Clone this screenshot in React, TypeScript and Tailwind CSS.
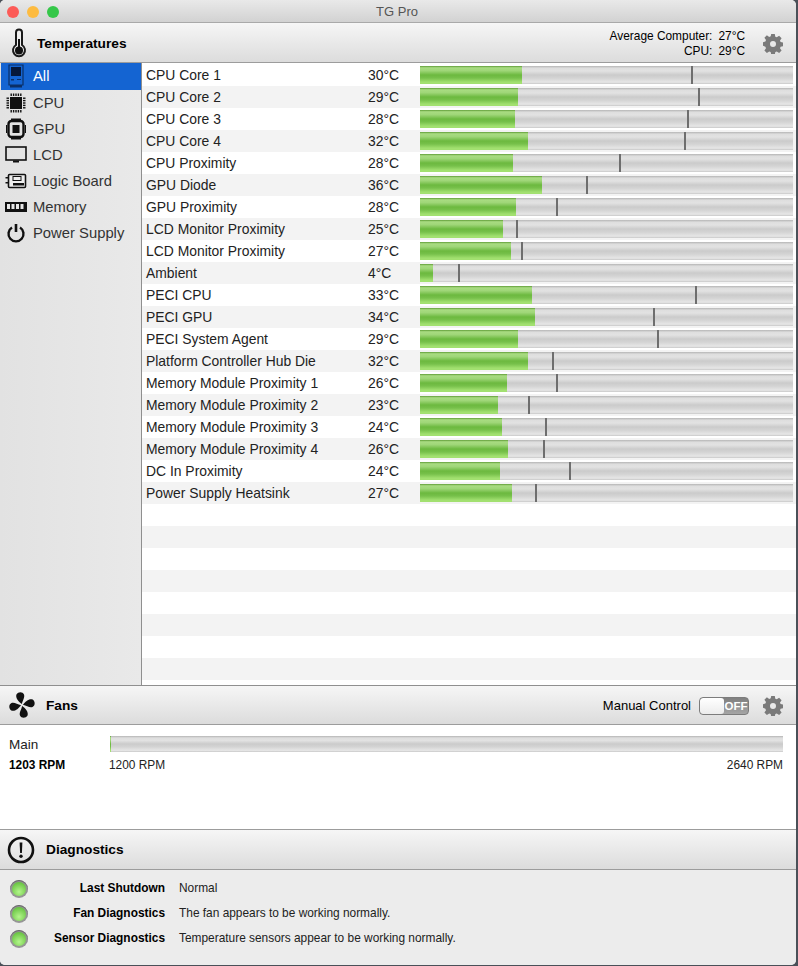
import { ReactNode } from "react";

const sensors = [
  { name: "CPU Core 1", temp: "30°C", fill: 102, mark: 271 },
  { name: "CPU Core 2", temp: "29°C", fill: 98, mark: 278 },
  { name: "CPU Core 3", temp: "28°C", fill: 95, mark: 267 },
  { name: "CPU Core 4", temp: "32°C", fill: 108, mark: 264 },
  { name: "CPU Proximity", temp: "28°C", fill: 93, mark: 199 },
  { name: "GPU Diode", temp: "36°C", fill: 122, mark: 166 },
  { name: "GPU Proximity", temp: "28°C", fill: 96, mark: 136 },
  { name: "LCD Monitor Proximity", temp: "25°C", fill: 83, mark: 96 },
  { name: "LCD Monitor Proximity", temp: "27°C", fill: 91, mark: 101 },
  { name: "Ambient", temp: "4°C", fill: 13, mark: 38 },
  { name: "PECI CPU", temp: "33°C", fill: 112, mark: 275 },
  { name: "PECI GPU", temp: "34°C", fill: 115, mark: 233 },
  { name: "PECI System Agent", temp: "29°C", fill: 98, mark: 237 },
  { name: "Platform Controller Hub Die", temp: "32°C", fill: 108, mark: 132 },
  { name: "Memory Module Proximity 1", temp: "26°C", fill: 87, mark: 136 },
  { name: "Memory Module Proximity 2", temp: "23°C", fill: 78, mark: 108 },
  { name: "Memory Module Proximity 3", temp: "24°C", fill: 82, mark: 125 },
  { name: "Memory Module Proximity 4", temp: "26°C", fill: 88, mark: 123 },
  { name: "DC In Proximity", temp: "24°C", fill: 80, mark: 149 },
  { name: "Power Supply Heatsink", temp: "27°C", fill: 92, mark: 115 },
];

const emptyRows = Array.from({ length: 9 }, (_, i) => i);

const barGray =
  "bg-[linear-gradient(to_bottom,#b5b5b5_0%,#dedede_12%,#e2e2e2_28%,#cbcbcb_50%,#d4d4d4_68%,#e6e6e6_90%,#c8c8c8_100%)]";
const barGreen =
  "bg-[linear-gradient(to_bottom,#5f9c36_0%,#a9dc82_10%,#9fd678_26%,#6cb93f_50%,#76c04a_66%,#a2e070_90%,#a2e070_100%)]";
const headerBg = "bg-[linear-gradient(to_bottom,#f6f6f6,#dcdcdc)]";

function Gear() {
  return (
    <svg width="20" height="20" viewBox="0 0 20 20" className="text-[#7a7a7a]">
      <path
        fill="currentColor"
        fillRule="evenodd"
        d="M8.2 0h3.6l.5 2.7 1.5.6 2.3-1.6 2.5 2.5-1.6 2.3.6 1.5 2.4.6v3.6l-2.4.5-.6 1.5 1.6 2.3-2.5 2.5-2.3-1.6-1.5.6-.5 2.6H8.2l-.5-2.6-1.5-.6-2.3 1.6-2.5-2.5 1.6-2.3-.6-1.5L0 11.800V8.200l2.400-.6.6-1.500L1.400 3.800l2.500-2.500 2.300 1.600 1.500-.6zM10 7a3 3 0 1 0 0 6 3 3 0 0 0 0-6z"
      />
    </svg>
  );
}

function Thermometer() {
  return (
    <svg width="16" height="32" viewBox="0 0 16 32">
      <path d="M5 17V4.500a3 3 0 0 1 6 0V17a6 6 0 1 1-6 0z" fill="#f0f0f0" stroke="#1a1a1a" strokeWidth="2" />
      <circle cx="8" cy="22.500" r="4" fill="#111" />
      <rect x="7" y="11" width="2" height="10" fill="#111" />
    </svg>
  );
}

function FanIcon() {
  const blade = "M14 13C11 10 8.500 5.500 10.500 2.500 12.500 0.300 17 0.800 17.800 4 18.300 7 15.500 9.500 14 13z";
  return (
    <svg width="28" height="28" viewBox="0 0 28 28">
      <g fill="#111" transform="rotate(-10 14 14)">
        <path d={blade} />
        <path d={blade} transform="rotate(90 14 14)" />
        <path d={blade} transform="rotate(180 14 14)" />
        <path d={blade} transform="rotate(270 14 14)" />
      </g>
    </svg>
  );
}

function Alert() {
  return (
    <svg width="28" height="28" viewBox="0 0 28 28">
      <circle cx="14" cy="14" r="12" fill="none" stroke="#111" strokeWidth="2.600" />
      <path d="M12.600 6.500h2.800l-.5 10.500h-1.800z" fill="#111" />
      <circle cx="14" cy="20.300" r="1.700" fill="#111" />
    </svg>
  );
}

function AllIcon() {
  return (
    <svg width="16" height="24" viewBox="0 0 16 24">
      <path d="M1 1h14v20H1z" fill="none" stroke="#0b2f66" strokeWidth="1.200" />
      <rect x="3" y="3" width="10" height="9" fill="#06183a" />
      <rect x="3" y="15" width="3" height="1.500" fill="#0b2f66" />
      <rect x="9" y="15" width="4" height="1" fill="#0b2f66" />
      <rect x="2" y="21" width="12" height="2.500" fill="#0b2f66" />
    </svg>
  );
}

function CpuIcon() {
  const pins = [0, 1, 2, 3, 4];
  return (
    <svg width="20" height="20" viewBox="0 0 20 20">
      <rect x="4" y="4" width="12" height="12" fill="#111" />
      {pins.map((p) => (
        <g key={p} fill="#111">
          <rect x={4.5 + p * 2.4} y="0.500" width="1.400" height="2.500" />
          <rect x={4.5 + p * 2.4} y="17" width="1.400" height="2.500" />
          <rect x="0.500" y={4.5 + p * 2.4} width="2.500" height="1.400" />
          <rect x="17" y={4.5 + p * 2.4} width="2.500" height="1.400" />
        </g>
      ))}
    </svg>
  );
}

function GpuIcon() {
  return (
    <svg width="20" height="22" viewBox="0 0 20 22">
      <rect x="2.500" y="3" width="15" height="16" rx="3" fill="none" stroke="#111" strokeWidth="2.400" />
      <rect x="6.500" y="7" width="7" height="8" fill="#111" />
      <rect x="5" y="0.500" width="10" height="1.600" fill="#111" />
      <rect x="5" y="19.900" width="10" height="1.600" fill="#111" />
      <rect x="0" y="7" width="1.200" height="8" fill="#111" />
      <rect x="18.800" y="7" width="1.200" height="8" fill="#111" />
    </svg>
  );
}

function LcdIcon() {
  return (
    <svg width="22" height="18" viewBox="0 0 22 18">
      <rect x="1" y="1" width="20" height="13" fill="none" stroke="#111" strokeWidth="1.600" />
      <path d="M8 14.500h6v2H8z" fill="#111" />
    </svg>
  );
}

function BoardIcon() {
  return (
    <svg width="22" height="16" viewBox="0 0 22 16">
      <rect x="3.500" y="1.500" width="17" height="13" rx="1" fill="#eeeeee" stroke="#111" strokeWidth="1.600" />
      <rect x="8" y="3.500" width="8" height="4" fill="none" stroke="#111" strokeWidth="1" />
      <rect x="8" y="10" width="11" height="2.500" fill="#111" />
      <rect x="0.500" y="4" width="3" height="1.500" fill="#111" />
      <rect x="0.500" y="9" width="3" height="1.500" fill="#111" />
    </svg>
  );
}

function MemoryIcon() {
  return (
    <svg width="22" height="10" viewBox="0 0 22 10">
      <rect width="22" height="10" fill="#111" />
      {[2, 6.5, 11, 15.5].map((x) => (
        <rect key={x} x={x} y="2" width="3" height="5" fill="#e6e6e6" />
      ))}
    </svg>
  );
}

function PowerIcon() {
  return (
    <svg width="20" height="20" viewBox="0 0 20 20">
      <path d="M6 4.500a7.500 7.500 0 1 0 8 0" fill="none" stroke="#111" strokeWidth="2.400" />
      <path d="M10 1v8" stroke="#111" strokeWidth="2.600" />
    </svg>
  );
}

const sideItems: { label: string; icon: ReactNode; active?: boolean }[] = [
  { label: "All", icon: <AllIcon />, active: true },
  { label: "CPU", icon: <CpuIcon /> },
  { label: "GPU", icon: <GpuIcon /> },
  { label: "LCD", icon: <LcdIcon /> },
  { label: "Logic Board", icon: <BoardIcon /> },
  { label: "Memory", icon: <MemoryIcon /> },
  { label: "Power Supply", icon: <PowerIcon /> },
];

function Led() {
  return (
    <div className="h-[18px] w-[18px] rounded-full bg-[#969696] p-[2px] shadow-[inset_0_1px_1px_#666]">
      <div className="h-full w-full rounded-full bg-[radial-gradient(circle_at_50%_70%,#b4f58c,#5cbc36_90%)]" />
    </div>
  );
}

export default function App() {
  return (
    <div className="h-[966px] w-[798px] overflow-hidden bg-[#4a5058] font-['Liberation_Sans',Arial,sans-serif] text-[#1a1a1a]">
      <div className="flex h-[965px] w-[796px] flex-col overflow-hidden rounded-t-[5px] rounded-b-[5px] bg-[#ececec]">
        {/* title bar */}
        <div className="relative flex h-[23px] shrink-0 items-center justify-center border-b border-[#a9a9a9] bg-[linear-gradient(to_bottom,#e9e9e9,#d2d2d2)] pr-[2px] pt-[2px] text-[13px] text-[#555555]">
          <div className="absolute left-[7px] top-[6px] flex gap-[8px]">
            <div className="h-3 w-3 rounded-full bg-[#fc5b57]" />
            <div className="h-3 w-3 rounded-full bg-[#fdbb40]" />
            <div className="h-3 w-3 rounded-full bg-[#35c749]" />
          </div>
          TG Pro
        </div>

        {/* temperatures header */}
        <div className={`flex h-[40px] shrink-0 items-center justify-between border-b border-[#9c9c9c] pl-[11px] pr-[13px] pt-[2px] ${headerBg}`}>
          <div className="flex items-center gap-[10px]">
            <Thermometer />
            <span className="pt-[2px] text-[13.7px] font-bold text-black">Temperatures</span>
          </div>
          <div className="flex items-center gap-[18px]">
            <div className="grid grid-cols-[auto_auto] gap-x-[6px] text-right text-[11.9px] leading-[15px] text-black">
              <span>Average Computer:</span>
              <span>27°C</span>
              <span>CPU:</span>
              <span>29°C</span>
            </div>
            <Gear />
          </div>
        </div>

        {/* main list */}
        <div className="flex h-[623px] shrink-0 border-b border-[#8f8f8f]">
          <div className="w-[142px] shrink-0 border-r border-[#8f8f8f] bg-[linear-gradient(to_right,#e2e2e2,#e9e9e9)] pl-[1px]">
            {sideItems.map((item) => (
              <div
                key={item.label}
                className={`flex h-[26px] items-center text-[14.8px] ${item.active ? "h-[27px] bg-[#1464d2] pb-[1px] text-white" : "text-[#333333]"}`}
              >
                <div className="flex w-[32px] shrink-0 items-center justify-center pr-[3px]">{item.icon}</div>
                {item.label}
              </div>
            ))}
          </div>
          <div className="min-w-0 flex-1 overflow-hidden bg-white pt-[1px]">
            {sensors.map((s, i) => (
              <div
                key={i}
                className={`flex h-[22px] items-center text-[13.9px] text-[#222222] ${i % 2 ? "bg-[#f3f3f3]" : "bg-white"}`}
              >
                <span className="w-[226px] shrink-0 pl-[4px]">{s.name}</span>
                <span className="w-[52px] shrink-0">{s.temp}</span>
                <div className={`relative h-[18px] w-[373px] shrink-0 ${barGray}`}>
                  <div className={`h-full ${barGreen}`} style={{ width: s.fill }} />
                  <div className="absolute top-0 h-full w-[2px] bg-[#6e6e6e]" style={{ left: s.mark }} />
                </div>
              </div>
            ))}
            {emptyRows.map((i) => (
              <div key={i} className={`h-[22px] ${i % 2 ? "bg-[#f3f3f3]" : "bg-white"}`} />
            ))}
          </div>
        </div>

        {/* fans */}
        <div className={`flex h-[39px] shrink-0 items-center justify-between border-b border-[#9c9c9c] pl-[8px] pr-[13px] ${headerBg}`}>
          <div className="flex items-center gap-[10px]">
            <FanIcon />
            <span className="pt-[2px] text-[13.7px] font-bold text-black">Fans</span>
          </div>
          <div className="flex items-center gap-[14px] pt-[1px]">
            <div className="flex items-center gap-[8px]">
              <span className="text-[13px] text-black">Manual Control</span>
              <div className="flex h-[18px] w-[50px] overflow-hidden rounded-[4px] border border-[#7c7c7c] bg-[linear-gradient(to_bottom,#7f7f7f,#a5a5a5)]">
                <div className="w-[24px] rounded-[3px] bg-[linear-gradient(to_bottom,#ffffff,#ececec)]" />
                <span className="flex-1 text-center text-[11.5px] font-bold leading-[16px] text-white">OFF</span>
              </div>
            </div>
            <Gear />
          </div>
        </div>

        <div className="h-[104px] shrink-0 bg-white pl-[9px] pr-[13px] pt-[11px]">
          <div className="flex h-[16px] items-center">
            <span className="w-[101px] shrink-0 pt-[3px] text-[13.5px] text-[#222222]">Main</span>
            <div className={`h-[16px] flex-1 ${barGray}`}>
              <div className={`h-full w-[1px] ${barGreen}`} />
            </div>
          </div>
          <div className="mt-[5px] flex items-center text-[11.9px] text-[#222222]">
            <span className="w-[100px] shrink-0 font-bold text-black">1203 RPM</span>
            <span className="flex-1">1200 RPM</span>
            <span>2640 RPM</span>
          </div>
        </div>

        {/* diagnostics */}
        <div className={`flex h-[41px] shrink-0 items-center gap-[11px] border-y border-[#9c9c9c] pl-[7px] ${headerBg}`}>
          <Alert />
          <span className="pt-[2px] text-[13.7px] font-bold text-black">Diagnostics</span>
        </div>
        <div className="flex-1 bg-[#ececec] pl-[10px] pt-[6px] text-[11.9px] text-[#222222]">
          {[
            ["Last Shutdown", "Normal"],
            ["Fan Diagnostics", "The fan appears to be working normally."],
            ["Sensor Diagnostics", "Temperature sensors appear to be working normally."],
          ].map(([label, value]) => (
            <div key={label} className="flex h-[25px] items-center">
              <Led />
              <span className="w-[137px] shrink-0 text-right font-bold text-black">{label}</span>
              <span className="ml-[14px]">{value}</span>
            </div>
          ))}
        </div>
      </div>
    </div>
  );
}
